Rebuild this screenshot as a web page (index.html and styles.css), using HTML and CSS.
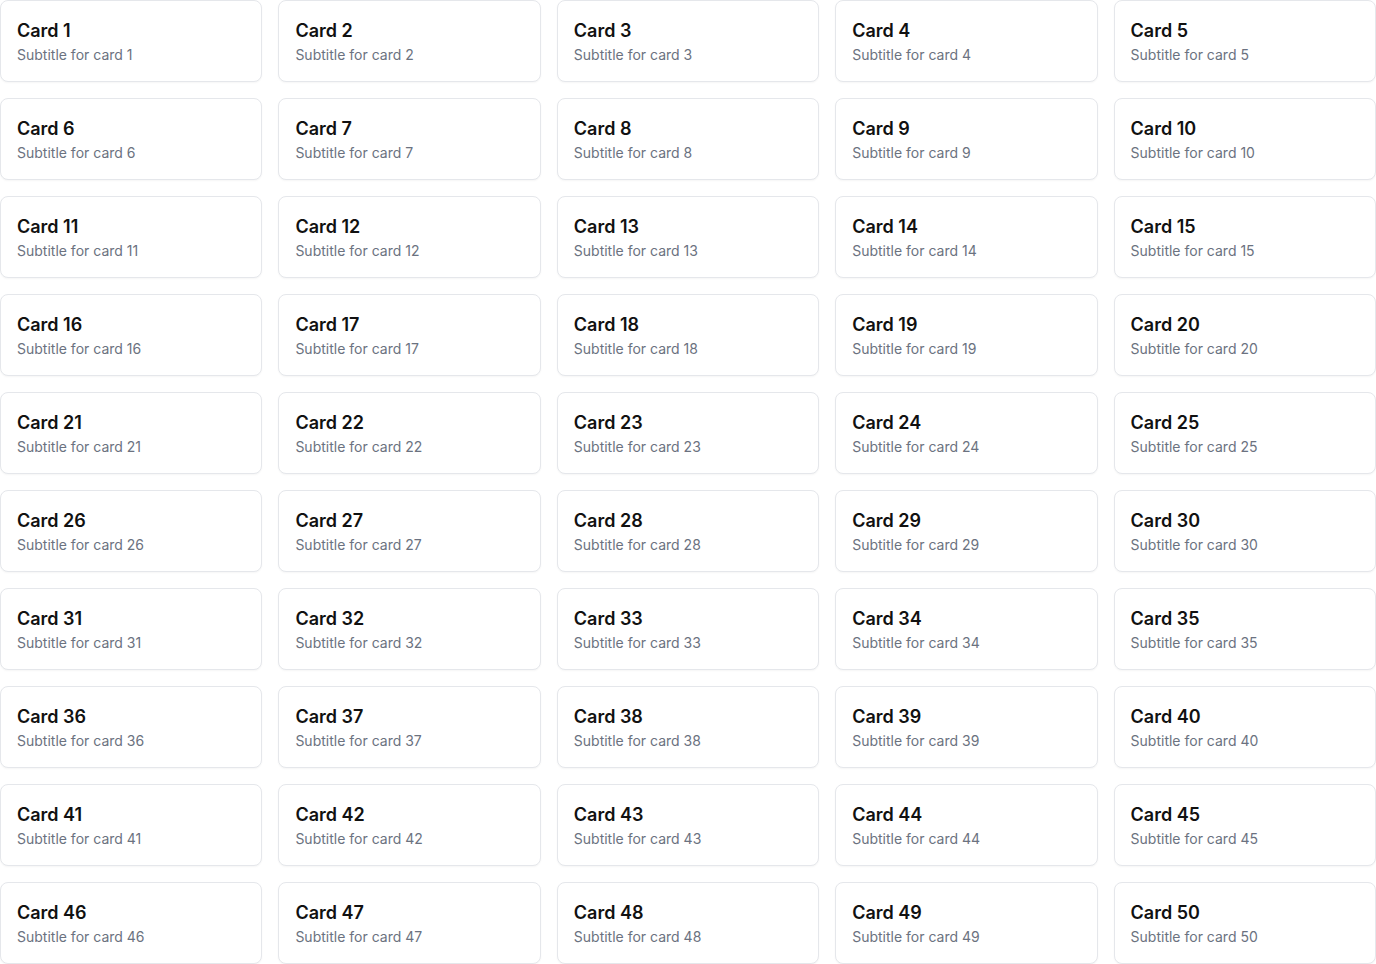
FILE: index.html
```html
<!DOCTYPE html>
<html>
<head>
<meta charset="utf-8">
<link rel="stylesheet" href="styles.css">
</head>
<body>
<div class="grid" id="grid"></div>
<script src="script.js"></script>
</body>
</html>
```
FILE: script.js
```js
var g = document.getElementById('grid');
for (var i = 1; i <= 50; i++) {
  var c = document.createElement('div');
  c.className = 'card';
  var t = document.createElement('div');
  t.className = 'title';
  t.textContent = 'Card ' + i;
  var s = document.createElement('div');
  s.className = 'subtitle';
  s.textContent = 'Subtitle for card ' + i;
  c.appendChild(t);
  c.appendChild(s);
  g.appendChild(c);
}
```
FILE: styles.css
```css
html, body {
  margin: 0;
  padding: 0;
  background: #ffffff;
  font-family: Inter, "Liberation Sans", sans-serif;
}
.grid {
  display: grid;
  grid-template-columns: repeat(5, 1fr);
  gap: 16px;
}
.card {
  border: 1px solid #e5e7eb;
  border-radius: 8px;
  padding: 16px;
  background: #fff;
  box-shadow: 0 1px 2px rgba(0,0,0,0.04);
}
.title {
  font-size: 18px;
  line-height: 28px;
  font-weight: 600;
  color: #111111;
}
.subtitle {
  font-size: 14px;
  line-height: 20px;
  color: #6b7280;
}
```
